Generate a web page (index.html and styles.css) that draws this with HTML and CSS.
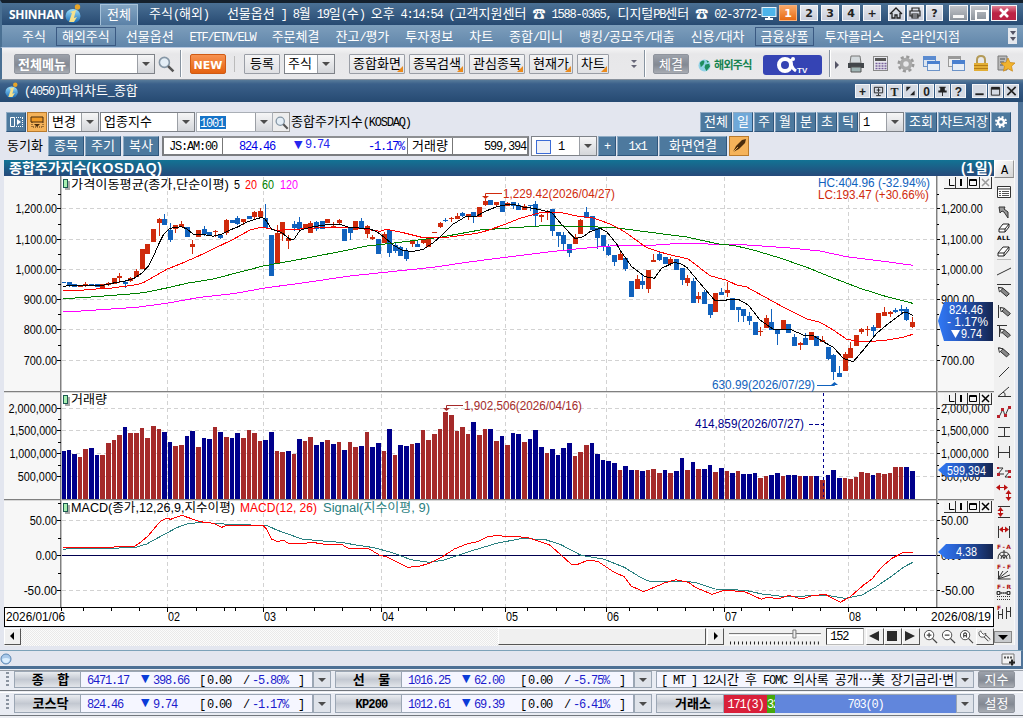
FILE: index.html
```
<!DOCTYPE html>
<html lang="ko">
  <head>
    <meta charset="utf-8">
    <title>(4050)파워차트_종합</title>
    <link rel="stylesheet" href="styles.css">
  </head>

  <body>
    <svg class="defs">
      <defs>
        <linearGradient id="ballGrad" x1="0" y1="0" x2="0" y2="1">
          <stop offset="0" stop-color="#9be0ff"/><stop offset="1" stop-color="#1668b4"/>
        </linearGradient>
        <linearGradient id="tagGrad">
          <stop offset="0" stop-color="#2f78f5"/><stop offset="0.3" stop-color="#2a63d2"/><stop offset="1" stop-color="#14244e"/>
        </linearGradient>
        <symbol id="logo" viewBox="0 0 17 20">
          <ellipse cx="8" cy="12" rx="7.500" ry="7" fill="url(#ballGrad)"/>
          <circle cx="12.500" cy="3" r="2.700" fill="#e6a428"/>
          <path d="M5 8 L11 6 L9 14 L12 13 L9 18 L4 18 L7 9z" fill="#f4e08c"/>
        </symbol>
        <symbol id="search" viewBox="0 0 16 16">
          <circle cx="6" cy="6" r="4.700" fill="#e4eef6" stroke="#8697a6" stroke-width="1.500"/>
          <path d="M9.500 9.500 L14.500 14.500" stroke="#555" stroke-width="2.400"/>
        </symbol>
        <symbol id="pen" viewBox="0 0 20 20">
          <path d="M5 6 l5 1 7 6 -3 3 -7 -6z" fill="#888" stroke="#222"/><path d="M5 6 l1 5 4 -4z" fill="#fff" stroke="#222"/>
        </symbol>
        <symbol id="eraser" viewBox="0 0 20 20">
          <path d="M4 12 l5 -6 h6 l-5 6z M4 12 v3 h6 v-3 M10 15 l5 -6 v-3" fill="#fff" stroke="#222"/>
        </symbol>
      </defs>
    </svg>

    <div class="titlebar">
      <b class="brand">SHINHAN</b>
      <svg class="brand-logo"><use href="#logo"/></svg>
      <div class="tab">전체</div>
      <div class="notice">주식(해외)   선물옵션 ] 8월 19일(수) 오후 4:14:54 (고객지원센터 ☎ 1588-0365, 디지털PB센터 ☎ 02-3772-</div>
      <svg class="monitor" viewBox="0 0 16 14"><rect x="1" y="1" width="14" height="9" fill="#4db4ea" stroke="#e8f4fb"/><path d="M8 10v2M4 12.500h8" stroke="#fff" stroke-width="2"/></svg>
      <div class="sys-group">
        <b class="sys on">1</b><b class="sys">2</b><b class="sys">3</b><b class="sys">4</b><b class="sys">+</b>
      </div>
      <div class="sys-group tools">
        <b class="sys"><svg viewBox="0 0 14 14"><path d="M1 8 L7 2 L13 8 M3 7v5h3V9h2v3h3V7" fill="none" stroke="#222" stroke-width="1.300"/></svg></b>
        <b class="sys"><svg viewBox="0 0 14 14"><path d="M4 5V2h7v3M2 5h10v5H2zM4 8h6v4H4z" fill="none" stroke="#222" stroke-width="1.200"/></svg></b>
        <b class="sys">?</b>
      </div>
      <div class="sys-group win">
        <b class="sys min"></b><b class="sys max"></b><b class="sys close"><svg viewBox="0 0 14 14"><path d="M3 3l8 8M11 3l-8 8" stroke="#fff" stroke-width="2.600"/></svg></b>
      </div>
    </div>

    <div class="menubar">
      <span>주식</span><span class="boxed">해외주식</span><span>선물옵션</span><span>ETF/ETN/ELW</span><span>주문체결</span><span>잔고/평가</span><span>투자정보</span><span>차트</span><span>종합/미니</span><span>뱅킹/공모주/대출</span><span>신용/대차</span><span class="boxed">금융상품</span><span>투자플러스</span><span>온라인지점</span>
      <i class="more"><svg viewBox="0 0 8 14"><path d="M1 1h6L4 5z M1 7h6L4 11z" fill="#556"/></svg></i>
    </div>

    <div class="toolbar">
      <b class="btn-all">전체메뉴</b>
      <div class="select code"><span></span><i></i></div>
      <svg class="tb-search"><use href="#search"/></svg>
      <div class="divider"></div>
      <b class="btn-new">NEW</b>
      <div class="grip-line"></div>
      <div class="btn wide35">등록</div>
      <div class="select kind"><span>주식</span><i></i></div>
      <div class="quick">
        <div class="btn q4">종합화면</div><div class="btn q4">종목검색</div><div class="btn q4">관심종목</div><div class="btn q3">현재가</div><div class="btn q2">차트</div>
      </div>
      <svg class="chev" viewBox="0 0 8 10"><path d="M1 0h6L4 3z M1 5h6L4 8z" fill="#667"/></svg>
      <div class="divider"></div>
      <div class="btn-exec">체결</div>
      <svg class="globe" viewBox="0 0 14 14"><circle cx="7" cy="7" r="6.500" fill="#8fd0e4"/><path d="M2 4 q4 -4 5 -1 l-1 3 -3 3z M8 6 l4 -1 1 3 -4 5 -2 -4z M9 1l3 2-2 1z" fill="#1d8c5e"/></svg>
      <b class="overseas">해외주식</b>
      <div class="atv"><svg viewBox="0 0 58 20"><circle cx="22" cy="10" r="6" fill="none" stroke="#fff" stroke-width="4"/><path d="M28 4 q-1 8 5 12" fill="none" stroke="#fff" stroke-width="3"/><circle cx="30" cy="4" r="2" fill="#fff"/></svg><b>TV</b></div>
      <div class="divider"></div>
      <svg class="play" viewBox="0 0 5 8"><path d="M0 0l4 4-4 4z" fill="#556"/></svg>
      <div class="tb-icons">
        <svg viewBox="0 0 18 18"><path d="M4 1h9l1 7H3z" fill="#d4dadd" stroke="#777"/><path d="M1 8h16v5H1z" fill="#42464a"/><path d="M4 12h10v5H4z" fill="#9fb4b4" stroke="#555"/></svg>
        <svg viewBox="0 0 18 18"><rect x="1.500" y="1.500" width="14" height="14" fill="#e8e8ee" stroke="#888"/><rect x="3" y="3" width="11" height="3" fill="#555"/><path d="M3.500 8.500h11M3.500 11h11M3.500 13.500h11" stroke="#775f9a" stroke-width="1.500" stroke-dasharray="2 1"/></svg>
        <svg viewBox="0 0 18 18"><circle cx="9" cy="9" r="7" fill="none" stroke="#999" stroke-width="3" stroke-dasharray="3 2.500"/><circle cx="9" cy="9" r="4.500" fill="none" stroke="#a9a9a9" stroke-width="3.500"/></svg>
        <svg viewBox="0 0 18 18"><rect x="1.500" y="1.500" width="12" height="10" fill="#dce5f0" stroke="#6c93c8"/><path d="M1 1h13v4H1z" fill="#5b8bd0"/><rect x="5.500" y="6.500" width="12" height="9" fill="#e8eef6" stroke="#6c93c8"/><path d="M5 6h13v3H5z" fill="#4a80cf"/></svg>
        <svg viewBox="0 0 18 18"><rect x="1.500" y="1.500" width="12" height="10" fill="#eee" stroke="#999"/><path d="M1 1h13v3H1z" fill="#999"/><rect x="5.500" y="5.500" width="12" height="10" fill="#e8eef6" stroke="#6c93c8"/><path d="M5 5h13v4H5z" fill="#4a80cf"/></svg>
        <svg viewBox="0 0 18 18"><path d="M5 8V5q0-4 4-4t4 4v3" fill="none" stroke="#b39a58" stroke-width="2"/><rect x="2" y="8" width="14" height="8" fill="#e2ae35"/><path d="M2 10.500h14M2 13.500h14" stroke="#b67e17"/></svg>
        <svg viewBox="0 0 18 18"><path d="M1 1h9v14H1z" fill="#bbb" stroke="#777"/><path d="M3 4h5M3 7h4M3 10h3" stroke="#555"/><path d="M11 3l2 4.500 5 .5-3.500 3.200 1 5-4.500-2.500-4.500 2.500 1-5L4 8l5-.5z" fill="#f2b32d" stroke="#c98512" stroke-width=".7"/></svg>
      </div>
    </div>

    <div class="subtitle">
      <svg class="sub-logo"><use href="#logo"/></svg>
      <span>(4050)파워차트_종합</span>
      <div class="sub-btns">
        <b>+</b>
        <b><svg viewBox="0 0 13 13"><path d="M2 2.500h9v6H2zM4 11.500h5M6.500 9v2M4.500 5.500h4M6.500 3.500v4" fill="none" stroke="#222"/></svg></b>
        <b class="serif">T</b>
        <b><svg viewBox="0 0 13 13"><path d="M2 2h5L2 7zM11 11H6l5-5z" fill="#222"/></svg></b>
        <b>0</b>
        <b><svg viewBox="0 0 13 13"><path d="M3 2h7v1H9v3h2v2H7v4H6V8H2V6h2V3H3z" fill="#222"/></svg></b>
        <b>?</b>
      </div>
      <div class="sub-btns right">
        <b><svg viewBox="0 0 13 13"><path d="M2 9h9v2H2z" fill="#222"/></svg></b>
        <b><svg viewBox="0 0 13 13"><path d="M2 3h9v8H2z" fill="none" stroke="#222"/><path d="M2 2h9v3H2z" fill="#222"/></svg></b>
        <b><svg viewBox="0 0 13 13"><path d="M2 2l9 9M11 2l-9 9" stroke="#222" stroke-width="1.800"/></svg></b>
      </div>
    </div>

    <div class="window">
      <div class="row row1">
        <div class="bb sq"><svg viewBox="0 0 18 18"><path d="M3.500 4.500h4v9h-4z" fill="none" stroke="#fff"/><path d="M9 4.500h7M9 13.500h7M15.500 5v9" stroke="#fff" stroke-dasharray="1 1"/><path d="M10 6l4 3-4 3z" fill="#fff"/></svg></div>
        <div class="bb sq orange"><svg viewBox="0 0 18 18"><path d="M3 4h12v5H3z" fill="#f09a26" stroke="#4a2c0c"/><path d="M4 9v5h11V9" fill="none" stroke="#4a2c0c" stroke-dasharray="1 1"/><path d="M6 11h6l-3 3z" fill="#4a2c0c"/></svg></div>
        <div class="select s-change"><span>변경</span><i></i></div>
        <div class="select s-index"><span>업종지수</span><i></i></div>
        <div class="select s-code"><span><mark>1001</mark></span><i></i></div>
        <div class="mag"><svg><use href="#search"/></svg></div>
        <span class="name">종합주가지수(KOSDAQ)</span>
        <div class="periods">
          <div class="bb w32">전체</div><div class="bb sq sel">일</div><div class="bb sq">주</div><div class="bb sq">월</div><div class="bb sq">분</div><div class="bb sq">초</div><div class="bb sq">틱</div>
          <div class="select s-num"><span>1</span><i></i></div>
          <div class="bb w32">조회</div><div class="bb w52">차트저장</div>
          <div class="bb sq gear"><svg viewBox="0 0 18 18"><circle cx="9" cy="9" r="3" fill="none" stroke="#fff" stroke-width="2.500"/><circle cx="9" cy="9" r="5" fill="none" stroke="#fff" stroke-width="2" stroke-dasharray="2 1.930"/></svg></div>
        </div>
      </div>

      <div class="row row2">
        <span class="sync">동기화</span>
        <div class="bb w36">종목</div><div class="bb w36">주기</div><div class="bb w36 copy">복사</div>
        <div class="quote">
          <span class="q-time">JS:AM:00</span><span class="q-price">824.46</span><span class="q-diff"><i class="tri">▼</i>9.74</span><span class="q-rate">-1.17%</span><span class="q-label">거래량</span><span class="q-vol">599,394</span>
        </div>
        <div class="select s-grid"><em></em><span>1</span><i></i></div>
        <div class="bb w18">+</div><div class="bb w41">1x1</div><div class="bb w68">화면연결</div>
        <div class="bb sq orange pen"><svg viewBox="0 0 18 18"><path d="M3 15l3-6 6-6 4-1-1 4-6 6z" fill="#4a2c0c"/><path d="M3 15l5-5" stroke="#e8a850"/></svg></div>
      </div>

      <div class="chart-area">
        <div class="chart-main">
          <div class="chart-head"><b>종합주가지수(KOSDAQ)</b><b>(1일)</b></div>
          <svg id="chart" viewBox="4 176 990 451"></svg>
          <div class="scroller">
            <div class="sbtn"><svg viewBox="0 0 12 12"><path d="M8 2v8L4 6z"/></svg></div>
            <div class="track"></div>
            <div class="thumb"></div>
            <div class="sbtn"><svg viewBox="0 0 12 12"><path d="M5 2v8l4-4z"/></svg></div>
            <svg class="slider" viewBox="0 0 94 17"><path d="M0 5.500h92" stroke="#777"/><path d="M0 7.500h92" stroke="#fff"/><path d="M1 15h92" stroke="#222" stroke-width="3" stroke-dasharray="1 3"/><path d="M64 2h3v8h-3z" fill="#eee" stroke="#777"/></svg>
            <div class="count">152</div>
            <div class="sbtn nav"><svg viewBox="0 0 12 12"><path d="M11 1v10L1 6z"/></svg></div>
            <div class="sbtn nav"><svg viewBox="0 0 12 12"><path d="M1 1h10v10H1z"/></svg></div>
            <div class="sbtn nav"><svg viewBox="0 0 12 12"><path d="M1 1v10l10-5z"/></svg></div>
            <svg class="zoom" viewBox="0 0 16 16"><circle cx="6.500" cy="6.500" r="5" fill="#fff" stroke="#444"/><path d="M4 6.500h5M6.500 4v5M10 10l5 5" stroke="#444" stroke-width="1.400"/></svg>
            <svg class="zoom" viewBox="0 0 16 16"><circle cx="6.500" cy="6.500" r="5" fill="#fff" stroke="#444"/><path d="M4 6.500h5M10 10l5 5" stroke="#444" stroke-width="1.400"/></svg>
            <svg class="zoom" viewBox="0 0 16 16"><circle cx="6.500" cy="6.500" r="5" fill="#fff" stroke="#444"/><path d="M5 9V5l1.500-1L8 5v4M5 7h3M10 10l5 5" stroke="#444" stroke-width="1.200" fill="none"/></svg>
            <div class="sbtn wrench"><svg viewBox="0 0 16 16"><path d="M7 7l6 6" stroke="#444" stroke-width="4"/><path d="M7 7l6 6" stroke="#fff" stroke-width="1.800"/><path d="M3 2a4 4 0 1 0 6 3L6 6 4 4z" fill="#fff" stroke="#444"/></svg></div>
          </div>
        </div>

        <div class="side">
          <div class="side-a">A</div>
          <svg viewBox="0 0 20 20"><path d="M3.500 4.500h13v11h-13zM3 7h14" fill="#fff" stroke="#333"/><path d="M5 9.500h2M8 9.500h7M5 11.500h2M8 11.500h7M5 13.500h2M8 13.500h7" stroke="#555"/></svg>
          <svg viewBox="0 0 20 20"><path d="M5 5h6l-1 2 4 3v6l-4-6-2-1-2 2z" fill="#999" stroke="#333"/></svg>
          <svg viewBox="0 0 20 20"><path d="M5 7l4-5h6l-4 5zM5 7v3h6V7M11 10l4-5V2" fill="#fff" stroke="#222"/><text x="3" y="18" class="tiny" textLength="13">ALL</text></svg>
          <svg viewBox="0 0 20 20"><use href="#eraser" y="-1"/><path d="M3 17.500h14" stroke="#bbb"/></svg>
          <svg viewBox="0 0 20 20"><path d="M3 13L17 6" stroke="#333"/></svg>
          <svg viewBox="0 0 20 20"><path d="M3 2.500h14" stroke="#333"/><use href="#pen" width="18" height="18"/></svg>
          <svg viewBox="0 0 20 20"><path d="M4.500 3v13" stroke="#333"/><use href="#pen" x="2" width="17" height="18"/></svg>
          <svg viewBox="0 0 20 20"><path d="M3 3.500h10M5.500 3v12" stroke="#333"/><use href="#pen" x="2" y="2" width="17" height="17"/></svg>
          <svg viewBox="0 0 20 20"><use href="#pen" width="18" height="19"/></svg>
          <svg viewBox="0 0 20 20"><path d="M5 15L15 5" stroke="#333"/></svg>
          <svg viewBox="0 0 20 20"><path d="M15 5L4 14.500h13M9 10q3 1 2 4" fill="none" stroke="#333"/></svg>
          <svg viewBox="0 0 20 20"><path d="M5 15L9 7l2 7 4-9" fill="none" stroke="#333"/><path d="M3 13h3v3H3zM7 6h3v3H7zM10 12h3v3h-3zM14 4h3v3h-3z" fill="#b9202a"/></svg>
          <svg viewBox="0 0 20 20"><path d="M4 5.500h12M4 14.500h12M10.500 5v9" stroke="#333"/></svg>
          <svg viewBox="0 0 20 20"><path d="M4.500 4v12M15.500 4v12M4 10.500h12" stroke="#333"/></svg>
          <svg viewBox="0 0 20 20"><path d="M4 6h5l-5 6h6M11 9h5l-5 6h5" fill="none" stroke="#333"/><path d="M3 5h2v2H3zM3 11h3v3H3zM14 8h3v3h-3zM14 14h3v2h-3z" fill="#b9202a"/></svg>
          <svg viewBox="0 0 20 20"><path d="M4 5.500h9M14.500 11v5" stroke="#b11"/><path d="M2 5.500l4-3v6zM14 5.500l-4-3v6zM14.500 8l-3 4h6zM14.500 19l-3-4h6z" fill="#b11"/></svg>
          <svg viewBox="0 0 20 20"><path d="M4 4.500h12M4 15.500h12" stroke="#333"/><path d="M6.500 7v6" stroke="#b11"/><path d="M6.500 5l-3 4h6zM6.500 15l-3-4h6z" fill="#b11"/></svg>
          <svg viewBox="0 0 20 20"><path d="M4.500 4v12M15.500 4v12" stroke="#333"/><path d="M7 7.500h6" stroke="#b11"/><path d="M5 7.500l4-3v6zM15 7.500l-4-3v6z" fill="#b11"/></svg>
          <svg viewBox="0 0 20 20"><text x="3" y="7" class="tiny red" textLength="14">F-A</text><path d="M4 17q0-7 6-7t6 7M7 17q0-4 3-4t3 4M10 8v9M10 16l-5-4M10 16l5-4" fill="none" stroke="#333"/></svg>
          <svg viewBox="0 0 20 20"><text x="3" y="7" class="tiny red" textLength="14">F-F</text><path d="M4.500 9v8h12M4 17l5-8M4 17L14 9M4 17l12-4" fill="none" stroke="#333"/></svg>
          <svg viewBox="0 0 20 20"><text x="3" y="7" class="tiny red" textLength="14">F-R</text><path d="M3 11h14M3 17.500h14M3 14.500h14" stroke="#333" stroke-dasharray="1 1"/><path d="M3 9.500h3v3H3zM13 9.500h3v3h-3zM6 11h7" fill="none" stroke="#333"/></svg>
          <svg viewBox="0 0 20 20"><text x="3" y="8" class="tiny red">F</text><path d="M4.500 9v8M8.500 7v10M12.500 5v12M16.500 5v10M4 12.500h5M12 9.500h5" stroke="#333"/></svg>
          <div class="side-down"><svg viewBox="0 0 12 8"><path d="M1 2h10L6 7z"/></svg></div>
        </div>
      </div>
    </div>

    <div class="strip">
      <svg viewBox="0 0 12 12"><circle cx="6" cy="6" r="5" fill="#a9c9ea" stroke="#5c87b4"/><path d="M2 6q4-2 8 0-1 4-4 4T2 6z" fill="#dcefff"/></svg>
      <svg class="strip-r" viewBox="0 0 15 13"><path d="M1 1h12v10H1z" fill="#f4f4f4" stroke="#777"/><path d="M3 4.500h8" stroke="#555" stroke-width="2" stroke-dasharray="2 1"/><path d="M8 9.500h6M11 6.500v6" stroke="#222" stroke-width="2"/></svg>
    </div>

    <div class="ticker">
      <div class="t-grip"></div>
      <b class="t-label">종&nbsp;&nbsp; 합</b>
      <div class="t-val"><span class="c1">6471.17</span><span class="c2">▼</span><span class="c3">398.66</span><span class="c4">[</span><span class="c5">0.00</span><span class="c6">/</span><span class="c7">-5.80%</span><span class="c4">]</span></div>
      <i class="t-drop"></i>
      <b class="t-label">선&nbsp;&nbsp; 물</b>
      <div class="t-val"><span class="c1">1016.25</span><span class="c2">▼</span><span class="c3">62.00</span><span class="c4">[</span><span class="c5">0.00</span><span class="c6">/</span><span class="c7">-5.75%</span><span class="c4">]</span></div>
      <i class="t-drop"></i>
      <div class="t-news">[ MT ] 12시간 후 FOMC 의사록 공개…美 장기금리·변</div>
      <i class="t-drop"></i>
      <div class="t-btn">지수</div>
    </div>
    <div class="ticker second">
      <div class="t-grip"></div>
      <b class="t-label">코스닥</b>
      <div class="t-val"><span class="c1">824.46</span><span class="c2">▼</span><span class="c3">9.74</span><span class="c4">[</span><span class="c5">0.00</span><span class="c6">/</span><span class="c7">-1.17%</span><span class="c4">]</span></div>
      <i class="t-drop"></i>
      <b class="t-label">KP200</b>
      <div class="t-val"><span class="c1">1012.61</span><span class="c2">▼</span><span class="c3">69.39</span><span class="c4">[</span><span class="c5">0.00</span><span class="c6">/</span><span class="c7">-6.41%</span><span class="c4">]</span></div>
      <i class="t-drop"></i>
      <b class="t-label market">거래소</b>
      <div class="t-up">171(3)</div><div class="t-flat">32</div><div class="t-down">703(0)</div>
      <i class="t-drop"></i>
      <div class="t-btn">설정</div>
    </div>

    <script src="chart.js"></script>
  </body>
</html>
```
FILE: styles.css
```
* {
  box-sizing: border-box;
}

body {
  margin: 0;
  width: 1023px;
  height: 718px;
  overflow: hidden;
  background: #eceef3;
  color: #000;
  font-family: "Noto Sans CJK KR", sans-serif;
  font-size: 13px;
  line-height: 18px;
  white-space: nowrap;
}

i, em {
  font-style: normal;
}

/* half width latin runs, 6px per character */
.l {
  font-family: "Liberation Mono", "Noto Sans CJK KR", monospace;
  font-size: 12px;
  letter-spacing: -1.2px;
}

b .l {
  letter-spacing: -0.8px;
}

.defs {
  position: absolute;
  width: 0;
  height: 0;
}

.titlebar {
  display: flex;
  height: 25px;
  padding: 1px 4px 0 7px;
  border-top: 3px solid #14202c;
  border-left: 2px solid #4a7093;
  background: linear-gradient(#4a7094, #274a72);
  color: #fff;
}

.brand {
  width: 56px;
  padding-top: 2px;
  font-family: "Open Sans", sans-serif;
  font-size: 12px;
}

.brand .l {
  font-family: "Open Sans", sans-serif;
  font-size: 12px;
  letter-spacing: -0.3px;
}

.brand-logo {
  width: 17px;
  height: 20px;
  margin: 0 18px 0 0;
}

.tab {
  width: 38px;
  height: 21px;
  border: 1px solid #a6c2da;
  border-bottom: 0;
  background: linear-gradient(#82a4c2, #5b81a7);
  text-align: center;
  line-height: 18px;
}

.notice {
  width: 623px;
  padding-left: 11px;
  white-space: pre;
  overflow: hidden;
  line-height: 17px;
}

.monitor {
  width: 16px;
  height: 15px;
  margin: 2px 1px 0 0;
}

.sys-group {
  display: flex;
  gap: 3px;
  margin: 1px 7px 0 1px;
}

.sys-group.tools {
  gap: 2px;
  margin-left: 0;
  margin-right: 6px;
}

.sys-group.win {
  gap: 2px;
  margin-left: 0;
  margin-right: 0;
}

.sys {
  width: 18px;
  height: 16px;
  border: 1px solid #f5f7fa;
  background: linear-gradient(#e4e7ed, #c9cedb);
  color: #222;
  text-align: center;
  font-family: "Liberation Sans", sans-serif;
  font-size: 13px;
  line-height: 14px;
}

.tools .sys {
  width: 17px;
}

.sys .l {
  font-family: "DejaVu Sans", sans-serif;
  font-size: 11px;
  letter-spacing: 0;
}

.sys svg {
  display: block;
  width: 14px;
  height: 14px;
}

.sys.on {
  background: linear-gradient(#f9a765, #e86b14);
  border-color: #f8b27c;
  color: #fff;
}

.win .sys.min,
.win .sys.max {
  width: 19px;
  background: linear-gradient(#c0c3c8, #8d949c);
}

.min::after {
  content: "";
  display: block;
  width: 11px;
  height: 3px;
  margin: 9px 0 0 3px;
  background: #f6f6f6;
}

.max::after {
  content: "";
  display: block;
  width: 9px;
  height: 7px;
  margin: 4px 0 0 4px;
  border: 2px solid #fff;
}

.win .sys.close {
  width: 26px;
  padding-left: 5px;
  background: linear-gradient(#e28396, #bb2245 50%);
}

.menubar {
  display: flex;
  gap: 16px;
  height: 23px;
  padding: 2px 6px 0 20px;
  border-left: 2px solid #4a7093;
  border-bottom: 1px solid #b6c8e0;
  background: linear-gradient(#7d9ebc, #6186aa);
  color: #fff;
  line-height: 17px;
}

.menubar .boxed {
  height: 19px;
  margin: 0 -6px;
  padding: 0 5px;
  border: 1px solid #3a5982;
  line-height: 15px;
}

.more {
  width: 9px;
  height: 16px;
  margin: 1px 0 0 auto;
  background: #e5e8ee;
}

.more svg {
  display: block;
  width: 8px;
  height: 14px;
  margin: 2px 0 0 1px;
}

.toolbar {
  display: flex;
  height: 32px;
  padding: 6px 0 0 12px;
  border-left: 2px solid #4a7093;
  border-bottom: 1px solid #88919c;
  background: linear-gradient(#f4f4f5, #e7e7e9 6px, #e9e9eb);
}

.btn-all,
.btn-exec,
.t-btn {
  border: 1px solid #8f949d;
  border-radius: 2px;
  background: linear-gradient(#9ca1aa, #838993 55%, #a8acb3);
  color: #fff;
  text-align: center;
}

.btn-all {
  width: 56px;
  height: 20px;
  line-height: 17px;
}

.select {
  display: flex;
  height: 20px;
  border: 1px solid #7e8288;
  background: #fff;
}

.select span {
  flex: 1;
  padding-left: 3px;
  line-height: 16px;
}

.select span .l {
  padding-left: 0;
}

.select i,
.t-drop {
  display: flex;
  align-items: center;
  justify-content: center;
  width: 17px;
  border-left: 1px solid #9b9fa5;
  background: linear-gradient(#f6f6f7, #d4d6da);
}

.select i::after,
.t-drop::after {
  content: "";
  border: 4px solid transparent;
  border-top-color: #4c4c4c;
  border-bottom: 0;
}

.code {
  width: 80px;
  margin-left: 5px;
}

.tb-search {
  width: 17px;
  height: 17px;
  margin: 2px 0 0 3px;
}

.divider {
  width: 2px;
  height: 27px;
  margin: -4px 0 0 5px;
  background: #8793a0;
  border-right: 1px solid #fff;
}

.btn-new {
  width: 36px;
  height: 20px;
  margin-left: 8px;
  border: 1px solid #cf5a14;
  border-radius: 2px;
  background: linear-gradient(#f79251, #e5620f);
  color: #fff;
  text-align: center;
}

.btn-new .l {
  font-family: "DejaVu Sans", sans-serif;
  font-size: 11px;
  letter-spacing: 0;
}

.grip-line {
  width: 2px;
  height: 16px;
  margin: 2px 8px 0;
  border-left: 1px solid #bbb;
}

.btn {
  position: relative;
  height: 20px;
  border: 1px solid #9a9ea6;
  border-radius: 1px;
  background: linear-gradient(#f4f4f5, #dfe0e3);
  text-align: center;
  line-height: 16px;
}

.wide35 {
  width: 36px;
}

.kind {
  width: 51px;
  margin-left: 4px;
}

.quick {
  display: flex;
  gap: 4px;
  margin-left: 14px;
}

.quick .btn::after {
  content: "";
  position: absolute;
  right: 1px;
  bottom: 1px;
  border: 3px solid #ea8a1c;
  border-top-color: transparent;
  border-left-color: transparent;
}

.q4 {
  width: 56px;
}

.q3 {
  width: 44px;
}

.q2 {
  width: 32px;
}

.chev {
  width: 8px;
  height: 10px;
  margin: 6px 1px 0 21px;
}

.btn-exec {
  width: 36px;
  height: 20px;
  margin-left: 7px;
  line-height: 17px;
}

.globe {
  width: 13px;
  height: 13px;
  margin: 5px 3px 0 9px;
}

.overseas {
  width: 39px;
  color: #15824f;
  font-size: 11px;
  letter-spacing: -0.7px;
  line-height: 21px;
}

.atv {
  display: flex;
  width: 59px;
  height: 20px;
  margin: 1px 2px 0 10px;
  border-radius: 3px;
  background: #3544b4;
  color: #fff;
}

.atv svg {
  width: 58px;
  height: 20px;
}

.atv b {
  margin: 4px 0 0 -24px;
}

.atv .l {
  font-family: "Liberation Sans", sans-serif;
  font-size: 8px;
  letter-spacing: 0;
}

.play {
  width: 5px;
  height: 8px;
  margin: 7px 0 0 4px;
}

.tb-icons {
  display: flex;
  gap: 7px;
  margin: 1px 0 0 7px;
}

.tb-icons svg {
  width: 18px;
  height: 18px;
}

.subtitle {
  display: flex;
  height: 22px;
  padding: 1px 4px 0 5px;
  background: linear-gradient(#587b9a, #3b608a 4px, #264a72);
  color: #fff;
  line-height: 17px;
}

.sub-logo {
  width: 14px;
  height: 17px;
  margin: 1px 5px 0 0;
}

.sub-btns {
  display: flex;
  gap: 1px;
  margin: 3px 6px 0 auto;
}

.sub-btns.right {
  margin: 3px 0 0;
}

.sub-btns b {
  width: 15px;
  height: 14px;
  border: 1px solid #f2f4f7;
  background: #d5dae3;
  color: #222;
  text-align: center;
  line-height: 12px;
}

.sub-btns .l {
  font-family: "Liberation Sans", sans-serif;
  letter-spacing: 0;
}

.sub-btns .serif .l {
  font-family: "Liberation Serif", serif;
}

.sub-btns svg {
  display: block;
  width: 13px;
  height: 12px;
}

.window {
  height: 548px;
  padding: 10px 0 0 4px;
  border-right: 5px solid #507499;
  background: #e3e6ef;
}

.row {
  display: flex;
  height: 20px;
}

.row1 {
  padding-left: 2px;
  margin-bottom: 4px;
}

.row2 {
  padding-left: 3px;
  margin-bottom: 4px;
}

.bb {
  height: 20px;
  border: 1px solid #8fabc4;
  border-right-color: #2f567c;
  border-bottom-color: #2f567c;
  background: #4d799e;
  color: #fff;
  text-align: center;
  line-height: 16px;
}

.bb svg {
  display: block;
  width: 18px;
  height: 18px;
}

.sq {
  width: 20px;
}

.orange {
  margin-left: 1px;
  border-color: #b97a2c;
  background: #f5b35a;
}

.sel {
  background: #6fa8d8;
}

.s-change {
  width: 51px;
  margin-left: 1px;
}

.s-index {
  width: 95px;
  margin-left: 1px;
}

.s-code {
  width: 77px;
  margin-left: 1px;
  border-color: #aaafb6;
}

.s-code > span {
  padding: 3px 0 0 3px;
}

mark {
  display: block;
  width: 26px;
  height: 13px;
  background: #1674c8;
  color: #fff;
  line-height: 11px;
}

.mag {
  width: 17px;
  height: 20px;
  border: 1px solid #999;
  border-left: 0;
  background: #eee;
}

.mag svg {
  display: block;
  width: 14px;
  height: 14px;
  margin: 3px 0 0 2px;
}

.name {
  padding-left: 1px;
}

.periods {
  display: flex;
  gap: 1px;
  margin: 0 7px 0 auto;
}

.w18 {
  width: 18px;
}

.w32 {
  width: 32px;
}

.w36 {
  width: 36px;
  margin-right: 1px;
}

.w41 {
  width: 41px;
  margin: 0 1px;
}

.w52 {
  width: 52px;
}

.w68 {
  width: 68px;
}

.s-num {
  width: 45px;
}

.sync {
  width: 41px;
}

.copy {
  margin-left: 1px;
  margin-right: 3px;
}

.quote {
  display: flex;
  width: 367px;
  height: 20px;
  border: 2px solid #7b7d80;
  border-top-color: #8d8f92;
  background: #fff;
  line-height: 14px;
}

.q-time {
  width: 59px;
  padding-left: 5px;
  border-right: 1px solid #777;
}

.q-price {
  width: 52px;
  color: #0000e6;
  text-align: right;
}

.q-diff {
  display: flex;
  width: 74px;
  padding-left: 19px;
  color: #2626ee;
}

.tri {
  width: 11px;
  font-family: "DejaVu Sans", sans-serif;
  font-size: 11px;
}

.q-rate {
  width: 59px;
  padding-right: 3px;
  border-right: 1px solid #777;
  color: #0000e6;
  text-align: right;
}

.q-label {
  width: 45px;
  padding-left: 4px;
  border-right: 1px solid #777;
}

.q-vol {
  flex: 1;
  padding-right: 1px;
  text-align: right;
}

.s-grid {
  width: 66px;
  margin: 0 1px 0 2px;
}

.s-grid em {
  width: 15px;
  height: 14px;
  margin: 3px 2px 0 4px;
  border: 1px solid #3b6bd6;
  background: #eef0f6;
}

.s-grid > span {
  padding-left: 5px;
}

.pen {
  margin-left: 2px;
}

.chart-area {
  display: flex;
  height: 486px;
}

.chart-main {
  width: 990px;
}

.chart-head {
  display: flex;
  justify-content: space-between;
  height: 16px;
  padding: 0 1px 0 5px;
  background: linear-gradient(#127394, #26497a);
  color: #fff;
  font-size: 14px;
  line-height: 14px;
}

.chart-head .l {
  font-family: "Liberation Sans", sans-serif;
  font-size: 14px;
  letter-spacing: 0.7px;
}

#chart {
  display: block;
  width: 990px;
  height: 451px;
  font-family: "Liberation Sans", "Noto Sans CJK KR", sans-serif;
  font-size: 12px;
}

.scroller {
  display: flex;
  height: 18px;
  margin-top: 1px;
  background: #f0f0f0;
}

.sbtn {
  width: 17px;
  height: 17px;
  border: 1px solid #fff;
  border-right-color: #555;
  border-bottom-color: #555;
  background: #f0f0f0;
}

.sbtn svg {
  display: block;
  width: 12px;
  height: 12px;
  margin: 1px;
}

.sbtn.nav {
  width: 18px;
  fill: #2a2a2a;
}

.track {
  width: 478px;
  background: repeating-conic-gradient(#e9e9e9 0 25%, #fbfbfb 0 50%) 0 0 / 2px 2px;
}

.thumb {
  width: 208px;
  height: 17px;
  margin-right: 1px;
  border: 1px solid #fff;
  border-right-color: #555;
  border-bottom-color: #555;
  background: #f0f0f0;
}

.slider {
  width: 94px;
  height: 17px;
  margin: 0 3px 0 5px;
}

.count {
  width: 38px;
  height: 17px;
  padding-left: 3px;
  margin-right: 2px;
  border: 1px solid #bbb;
  border-top-color: #444;
  border-left-color: #444;
  background: #fff;
  line-height: 12px;
}

.zoom {
  width: 15px;
  height: 15px;
  margin: 1px 0 0 3px;
}

.wrench {
  width: 18px;
  margin-left: 2px;
}

.wrench svg {
  width: 14px;
  height: 14px;
  margin: 0 1px;
}

.side {
  width: 21px;
  background: #f0f0f0;
  border-right: 1px solid #f8f8f8;
  margin-bottom: 1px;
}

.side > svg {
  display: block;
  width: 20px;
  height: 20px;
}

.side-a {
  height: 18px;
  margin-bottom: 4px;
  border: 1px solid #fff;
  border-right-color: #999;
  border-bottom-color: #888;
  background: linear-gradient(135deg, #fff, #d4d4d4);
  text-align: center;
  line-height: 15px;
}

.side-down {
  width: 18px;
  height: 12px;
  margin-top: 9px;
  border: 1px solid #888;
  background: #c8cacd;
}

.side-down svg {
  display: block;
  width: 12px;
  height: 8px;
  margin: 1px 2px;
}

.tiny {
  font-family: "DejaVu Sans", sans-serif;
  font-size: 6px;
  font-weight: bold;
}

.red {
  fill: #b11111;
}

.strip {
  display: flex;
  justify-content: space-between;
  height: 19px;
  padding: 2px 5px 0 0;
  border-top: 1px solid #7ca2b9;
  border-right: 2px solid #507499;
  border-bottom: 3px solid #4c7095;
  background: #e3e6ef;
}

.strip svg {
  width: 12px;
  height: 12px;
}

.strip .strip-r {
  width: 15px;
  height: 13px;
}

.ticker {
  display: flex;
  height: 21px;
  margin-top: 1px;
  padding: 0 6px 2px 2px;
  border-top: 1px solid #9aa0a8;
  border-bottom: 1px solid #72777d;
  background: #e9ecf3;
  line-height: 13px;
}

.ticker.second {
  height: 24px;
  padding: 1px 6px 2px 2px;
  border-top: 1px solid #fff;
  line-height: 15px;
}

.t-grip {
  width: 3px;
  height: 16px;
  margin: 1px 5px 0 4px;
  background: repeating-linear-gradient(#8a93a0 0 2px, transparent 2px 4px);
}

.t-label {
  width: 67px;
  padding-left: 6px;
  border: 1px solid #9ba6b4;
  background: linear-gradient(#e9ecf0, #c3c8d1 50%, #e2e5ea);
  text-align: center;
}

.t-val {
  display: flex;
  width: 232px;
  padding-left: 6px;
  border: 1px solid #9ba6b4;
  border-left: 0;
  background: #f5f6ff;
}

.c1 {
  width: 54px;
  color: #1c1ccc;
}

.c2 {
  width: 12px;
  color: #0a3cd8;
  font-family: "DejaVu Sans", sans-serif;
  font-size: 11px;
}

.c3 {
  width: 46px;
  color: #1c1ccc;
}

.c4 {
  width: 8px;
}

.c5 {
  width: 36px;
}

.c6 {
  width: 9px;
}

.c7 {
  width: 46px;
  color: #1c1ccc;
}

.t-drop {
  width: 18px;
  margin-right: 4px;
  border: 1px solid #9ba6b4;
  background: #dfe3ea;
}

.t-news {
  width: 300px;
  padding-left: 4px;
  border: 1px solid #9ba6b4;
  background: #f5f6ff;
  overflow: hidden;
}

.market {
  width: 68px;
}

.t-up,
.t-flat,
.t-down {
  border-top: 1px solid #9ba6b4;
  color: #fff;
  text-align: center;
  overflow: hidden;
}

.t-up {
  width: 43px;
  background: #d9203a;
}

.t-flat {
  width: 8px;
  background: #45a80c;
}

.t-down {
  width: 181px;
  background: #6186dc;
}

.t-btn {
  width: 37px;
}
```
FILE: chart.js
```
const svg = document.getElementById("chart");
const out = [];

// candle: color, body top, body bottom, wick top, wick bottom (1/3 px below y=160)
const candles = `D365,368 D367,376,367,382 D372,380 U374,381 U373,376,367,380 D371,376 D373,380 U372,383 U370,375,366,378 U354,372
U349,353,338,368 D366,373,361,385 U355,362,350,366 U334,350,327 U267,326 U252,281 U207,245 U177,190,174,227 D178,194,162 D210,240,190,246
U196,206,196,218 U192,202,183 D202,230 U252,260,240,281 U210,230 D208,223,197,228 D215,224 U213,217,209,230 D224,234,222,237 U180,218,178,224
D180,188 D174,191,168,196 U178,186,178,195 D168,178 U156,170,152,178 U153,170,144 D174,203,132 D225,347 U220,308,196 U186,222,186,243
U234,242,225,266 D192,203,184,212 D186,206,172 U192,208 U188,218,183 D186,206,184,212 D182,206 U178,190 U198,201,186,203 U180,189,177,195
D208,242 D204,218,204,240 U183,209 D183,206,174 U197,222,195,234 U231,236,225,240 D237,281 U222,248,216 D210,278,207,291 D255,273,250,278
D262,288,258 D272,297,263,302 U244,252,244,262 D252,261,243 U241,249,238,251 U236,261 U215,218 U188,201,186,203 D179,182,175,186 U174,177,170,186
U168,177,158 D159,168,156,171 U162,168,162,180 D156,170,156,188 U141,171 U122,135,118,138 D120,135 U126,135,126,141 D123,155 U130,137,126
D126,138,126,147 D135,150,129 U138,150,132 D134,138,134,153 D132,168,123,198 U165,170,162,186 U153,158,150,180 D147,212,147,228 D216,228,216,261 D225,252,216,270
D252,279,252,291 U231,251,222 U180,221,177 D156,173,141 D168,210 D204,234,204,266 D225,261,225,273 D261,285,252,288 D285,306,285,318 U282,300,270
D294,327,294,333 D363,411 U357,386,345 D363,375,342,387 U330,387,330,398 U300,305,282 D282,300,273,303 D291,312 U297,312,292,318 D298,330
D323,360,323,375 U354,369,345,377 D363,429,354 U408,417,396,429 D396,431,390 D431,465,431,474 U399,455 D396,405,384 U390,398,366,411 D414,450
D441,450,441,486 D447,468,447,486 D468,483,456,495 D486,525 U513,516,500,527 U473,503,465 D486,510,447 D510,522,510,555 U480,507 D492,518
D531,557,522 U550,555,546,570 D534,554,519 U516,540 D528,557 U540,545,528 D561,597,561,600 D585,635,582,660 D639,650,618 U582,632,576
U564,593,546 U525,557 U507,516,504,522 U507,510,498,527 D501,513,495,528 U459,503 U456,468,441 U457,461,454,470 D450,456,444,459 D447,453,435,465
D447,480,441,483 U486,501,471,504`.split(/\s+/);

// volume: color, bar top (1/3 px below y=390)
const volumes = `B183 B180 B192 R201 R177 B174 B195 R195 R159 R150 R135 B111 R129 R129 R114 R144 R108 R117 B126 B156
R168 R165 B138 B123 R171 B144 B147 R111 B126 R141 B144 B129 R144 R120 R129 R153 B150 B126 R183 R186
B183 R192 B147 R153 R141 B165 B156 R150 B162 R156 B180 R156 R171 B168 R126 B171 B159 R183 B117 R195
B165 B168 R162 B159 R120 R150 R132 R117 R66 R75 R123 R111 R132 B96 R135 R117 B117 R153 B138 R165
B129 B132 R156 B147 B120 B171 R189 B177 B195 B174 B159 R198 R186 R165 B159 B192 B210 B213 B219 R240
B228 B240 R240 B243 R240 R237 R249 B240 R249 B243 B204 R240 B216 R237 B237 B225 R246 B234 R243 B249
R243 B252 B252 B249 R264 R258 B255 B249 R258 B255 B255 R258 B258 R258 B258 R270 B255 B240 B264 R264
R267 R261 R246 R249 B255 R249 R252 R249 R231 R231 B231 B243`.split(/\s+/);

// line segments: three parts, each with its own x origin
const ma5 = ["190,379 220,376 308,376 345,368 375,363 400,356 425,340 445,318 460,290 475,255 490,225 510,205 545,200 560,207 580,222 600,222 640,229 665,222 690,210 715,200 740,186 785,172 795,177 815,208 845,218 870,238 882,238",
  "0,211 30,202 75,195 120,193 150,203 205,205 230,215 255,234 280,255 305,270 335,275 370,268 400,248 430,222 455,195 500,168 530,168 560,152 590,140 615,135 640,133 670,141 700,145 740,154 755,157 780,188 825,236 850,230 870,215 900,205 920,215 950,252",
  "0,270 35,320 75,350 103,355 125,325 160,308 180,310 200,322 240,370 285,422 355,418 385,435 420,480 460,508 510,508 550,525 580,527 610,545 640,562 670,595 700,605 730,570 770,520 800,495 850,457 860,456 880,468"];
const ma20 = ["190,391 250,391 260,388 320,386 410,374 430,368 500,328 550,308 600,286 700,238 750,210 785,201 830,211",
  "0,207 75,202 165,203 240,214 260,208 310,218 370,233 450,231 530,220 560,212 610,195 660,175 720,158 780,157 830,168 880,174 930,192",
  "0,207 20,220 80,263 140,282 205,297 270,347 320,361 350,375 380,381 420,403 500,447 560,477 600,487 640,510 680,538 720,545 790,542 850,532 878,523"];
const ma60 = ["190,416 260,412 380,403 430,398 510,382 560,370 640,357 720,336 790,318",
  "0,298 140,271 200,258 300,247 420,232 540,210 730,197 850,199 940,203",
  "0,205 90,217 200,231 300,253 340,256 400,270 480,294 560,322 640,354 720,385 800,410 878,430"];
const ma120 = ["190,454 230,454 410,442 500,430 600,412 700,401 800,383",
  "0,370 150,348 300,332 400,322 500,307 600,294 750,275 850,265 940,257",
  "0,256 80,257 180,250 380,255 500,263 600,273 680,290 790,304 878,316"];
const macd = ["190,471 285,471 330,472 370,469 400,471 420,458 445,437 480,395 500,385 512,388 545,376 600,395 640,400 665,412 680,406 750,408 790,407 800,418 815,448 835,455 850,450 865,460 905,461 935,457 970,462",
  "0,462 20,474 80,474 115,495 140,502 200,532 235,529 270,518 300,503 340,477 380,461 410,455 440,440 470,436 490,439 530,440 560,443 600,456 625,464 660,495 690,522 710,523 740,511 770,514 820,547 850,560 870,588 908,605 940,592 970,579 1005,569",
  "0,573 20,577 40,592 90,613 130,600 190,606 238,628 255,622 290,626 320,616 360,627 390,617 430,613 475,637 505,620 545,585 570,567 600,530 630,505 665,487 693,487"];
const signal = ["190,478 220,475 340,475 410,471 440,462 480,440 530,413 560,402 605,397 700,404 800,406 830,420 870,434 905,447 990,455",
  "0,457 50,466 100,473 160,490 210,509 265,517 310,510 400,480 470,459 540,446 610,448 660,464 720,496 790,508 850,532 900,563 930,576",
  "0,574 40,577 100,597 190,601 240,612 300,619 440,617 490,625 540,615 580,592 630,558 665,531 693,517"];

function rect(x, y, w, h, fill) {
  out.push(`<rect x="${x}" y="${y}" width="${w}" height="${h}" fill="${fill}"/>`);
}

function line(x1, y1, x2, y2, color, dash) {
  out.push(`<path d="M${x1} ${y1}L${x2} ${y2}" stroke="${color}" shape-rendering="crispEdges"${dash ? ` stroke-dasharray="${dash}"` : ""}/>`);
}

function text(str, x, y, w, color = "#000", size = 12) {
  out.push(`<text x="${x}" y="${y}" textLength="${w}" lengthAdjust="spacingAndGlyphs" fill="${color}" font-size="${size}">${str}</text>`);
}

function curve(parts, origins, top, color) {
  const points = parts.flatMap((part, p) =>
    part.split(" ").map((pair) => {
      const [x, y] = pair.split(",").map(Number);
      return `${(origins[p] + x / 3).toFixed(1)},${(top + y / 3).toFixed(1)}`;
    })
  );
  out.push(`<polyline points="${points.join(" ")}" fill="none" stroke="${color}" shape-rendering="crispEdges"/>`);
}

const xAt = (i) => Math.round(63 + i * 5.623);

// backgrounds
rect(4, 176, 990, 451, "#f7f7f7");
rect(62, 176, 875, 431, "#fff");

// grid
const months = [[167, "02"], [263, "03"], [381, "04"], [505, "05"], [606, "06"], [724, "07"], [848, "08"]];
months.forEach(([x]) => line(x + 0.5, 177, x + 0.5, 607, "#d2d2d2", "4 3"));
[208, 239, 269, 299, 329, 360, 408, 430, 453, 476, 520, 590].forEach((y) => line(62, y + 0.5, 936, y + 0.5, "#d2d2d2", "4 3"));

// candles
candles.forEach((c, i) => {
  const [top, bottom, high = top, low = bottom] = c.slice(1).split(",").map(Number);
  const color = c[0] === "U" ? "#cf2a0c" : "#1162bd";
  const y = (v) => Math.round(160 + v / 3);
  rect(xAt(i) - 2, y(top), 5, Math.max(1, y(bottom) - y(top)), color);
  rect(xAt(i), y(high), 1, y(low) - y(high), color);
});
const priceX = [0, 300, 620];
curve(ma120, priceX, 160, "#ff00ff");
curve(ma60, priceX, 160, "#008000");
curve(ma20, priceX, 160, "#ff0000");
curve(ma5, priceX, 160, "#000");

// volume
volumes.forEach((v, i) => {
  const y = Math.round(390 + Number(v.slice(1)) / 3);
  rect(xAt(i) - 2, y, xAt(i + 1) - xAt(i) - 1, 499 - y, v[0] === "R" ? "#a52a2a" : "#00008b");
});
line(823.5, 393, 823.5, 497, "#00008b", "3 3");
line(809, 424.5, 823, 424.5, "#00008b", "4 2");

// macd
line(62, 555.5, 940, 555.5, "#000050");
curve(signal, [0, 341, 682], 390, "#2a8080");
curve(macd, [0, 341, 682], 390, "#ff0000");

// frame
[391, 499].forEach((y) => {
  rect(4, y, 990, 1, "#808080");
  rect(4, y + 1, 990, 1, "#d8d8d8");
});
[60, 936].forEach((x) => {
  rect(x, 176, 1, 431, "#808080");
  rect(x + 1, 176, 1, 431, "#c0c0c0");
});

// axes
const labels = [[208, "1,200.00"], [239, "1,100.00"], [269, "1,000.00"], [299, "900.00"], [329, "800.00"], [360, "700.00"],
  [408, "2,000,000"], [430, "1,500,000"], [453, "1,000,000"], [476, "500,000"], [520, "50.00"], [555, "0.00"], [590, "-50.00"]];
labels.forEach(([y, s]) => {
  const commas = (s.match(/[.,]/g) || []).length;
  const w = (s.length - commas) * 6 + commas * 3.3 - (s[0] === "1" ? 1 : 0);
  text(s, 57 - w, y + 5, w);
  // the value tag hides the 800 line on the right axis
  if (y !== 329) text(s, 941, y + 5, w);
  line(57, y + 0.5, 61, y + 0.5, "#000");
  line(937, y + 0.5, 940, y + 0.5, "#000");
});
[194, 224, 254, 284, 314, 345, 419, 442, 465, 503, 538, 573].forEach((y) => {
  line(58, y + 0.5, 61, y + 0.5, "#000");
  line(937, y + 0.5, 939, y + 0.5, "#000");
});

// legends
[178, 394, 502].forEach((y) => {
  rect(65, y + 3, 5, 9, "#aaa");
  out.push(`<rect x="63.500" y="${y + 1.5}" width="4" height="8" fill="#a8f0b0" stroke="#1c5a50"/>`);
});
text("가격이동평균(종가,단순이평)", 71, 189, 158);
text("5", 234, 189, 6);
text("20", 245, 189, 12, "#ff0000");
text("60", 262, 189, 12, "#008000");
text("120", 280, 189, 18, "#ff00ff");
text("거래량", 71, 404, 36);
text("MACD(종가,12,26,9,지수이평)", 71, 512, 164);
text("MACD(12, 26)", 240, 512, 77, "#ff0000");
text("Signal(지수이평, 9)", 323, 512, 107, "#2a8080");
text("HC:404.96 (-32.94%)", 818, 187, 112, "#1162bd");
text("LC:193.47 (+30.66%)", 818, 199, 111, "#cf2a0c");

// callouts
text("1,229.42(2026/04/27)", 503, 198, 112, "#cf2a0c");
out.push('<path d="M502 193.500H485.500V198" fill="none" stroke="#cf2a0c"/><path d="M482 196h7l-3.500 3z" fill="#cf2a0c"/>');
text("630.99(2026/07/29)", 712, 389, 103, "#1162bd");
out.push('<path d="M817 385.500H834.500V383" fill="none" stroke="#1162bd"/><path d="M831 385h7l-3.500-3z" fill="#1162bd"/>');
text("1,902,506(2026/04/16)", 464, 410, 118, "#a52a2a");
out.push('<path d="M463 405.500H446.500V410" fill="none" stroke="#a52a2a"/><path d="M443 408h7l-3.500 3z" fill="#a52a2a"/>');
text("414,859(2026/07/27)", 695, 428, 109, "#00008b");

// panel buttons
[176, 392, 500].forEach((top, p) => {
  for (let i = 0; i < 4; i++) {
    rect(944 + i * 12, top + 1, 12, 12, "#333");
    rect(944 + i * 12, top + 1, 11, 11, "#f4f4f4");
  }
  const y = top + 3;
  rect(960, y, 2, 7, "#000");
  out.push(`<path d="M949.500 ${y}v6.500h5" fill="none" stroke="#000"/>
    <path d="M969.500 ${y + 0.5}h7v6h-7zM969 ${y + 1.5}h8" fill="none" stroke="#000"/>
    <path d="M982 ${y}l7 7M989 ${y}l-7 7" stroke="${p ? "#000" : "#999"}" stroke-width="1.500"/>`);
});

// value tags
out.push('<path d="M938 321l6-19h49v39h-49z" fill="url(#tagGrad)"/>');
text("824.46", 949, 314, 34, "#fff");
text("- 1.17%", 947, 326, 41, "#fff");
out.push('<path d="M951 330h9l-4.500 8z" fill="#fff"/>');
text("9.74", 961, 338, 21, "#fff");
out.push('<path d="M938 470l8-7h47v14h-47z" fill="url(#tagGrad)"/>');
text("599,394", 947, 475, 39, "#fff");
out.push('<path d="M938 552l8-8h47v15h-47z" fill="url(#tagGrad)"/>');
text("4.38", 956, 556, 21, "#fff");

// date axis
out.push('<rect x="4.500" y="607.500" width="989" height="19" fill="#fff" stroke="#000"/>');
text("2026/01/06", 6, 621, 59);
text("2026/08/19", 931, 621, 60);
months.forEach(([x, s]) => {
  text(s, x + 1, 621, 12);
  line(x + 0.5, 607, x + 0.5, 612, "#000");
});
[61, 83, 111, 139, 196, 224, 235, 286, 314, 342, 370, 398, 426, 454, 482, 527, 556, 584, 629, 657, 685, 713, 741, 769, 792, 820, 876, 904, 916].forEach((x) => line(x + 0.5, 607, x + 0.5, 611, "#000"));

svg.innerHTML = out.join("");

// wrap latin runs so that they sit on the half width grid
const walker = document.createTreeWalker(document.body, NodeFilter.SHOW_TEXT);
const nodes = [];
while (walker.nextNode()) {
  const node = walker.currentNode;
  if (node.nodeValue.trim() && !node.parentNode.closest("svg, script")) nodes.push(node);
}
nodes.forEach((node) => {
  const box = document.createElement("span");
  box.innerHTML = node.nodeValue.replace(/[\x20-\x7e]+/g, '<span class="l">$&</span>');
  node.replaceWith(...box.childNodes);
});
```
